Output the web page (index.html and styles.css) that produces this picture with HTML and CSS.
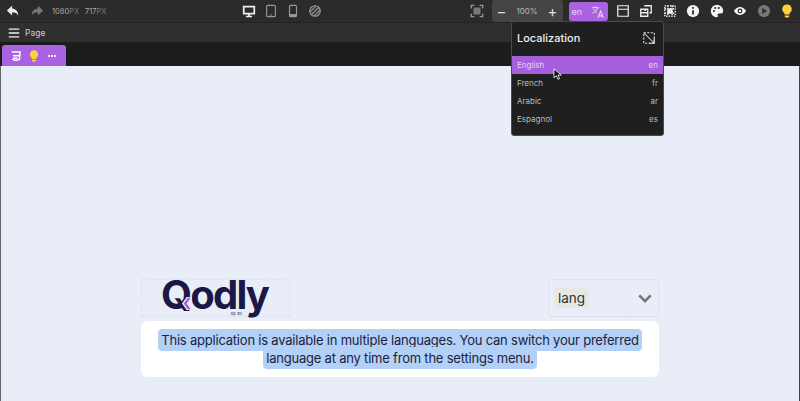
FILE: index.html
```html
<!DOCTYPE html>
<html lang="en">

<head>
    <meta charset="UTF-8">
    <meta name="viewport" content="width=device-width, initial-scale=1.0">
    <title>Qodly Studio</title>
    <link rel="stylesheet" href="styles.css">
</head>

<body>
    <div class="toolbar">
        <div class="history">
            <svg class="icon" viewBox="0 0 16 16"><path fill="#eee" d="M7 2 1 7.500 7 13V9.500c3.500 0 5.500 1 7 4 0-5-2.500-8-7-8.500z"/></svg>
            <svg class="icon" viewBox="0 0 16 16"><path fill="#777" d="M9 2l6 5.500L9 13V9.500c-3.500 0-5.500 1-7 4 0-5 2.500-8 7-8.500z"/></svg>
        </div>
        <div class="size"><b>1080</b>PX</div>
        <div class="size size-h"><b>717</b>PX</div>

        <div class="devices">
            <svg class="icon" viewBox="0 0 16 16"><path fill="none" stroke="#eee" stroke-width="2" d="M2 3h12v8H2z"/><path fill="#eee" d="M4.500 13.500h7V15h-7zM7 11h2v3H7z"/></svg>
            <svg class="icon" viewBox="0 0 16 16"><rect x="3" y="1.500" width="10" height="13" rx="1.500" fill="none" stroke="#999" stroke-width="1.300"/><path stroke="#999" d="M6.500 12.500h3"/></svg>
            <svg class="icon" viewBox="0 0 16 16"><rect x="4" y="1.500" width="8" height="13" rx="1.500" fill="none" stroke="#999" stroke-width="1.300"/><path fill="#999" d="M4 11.500h8v3H4z"/></svg>
            <svg class="icon" viewBox="0 0 16 16"><circle cx="8" cy="8" r="6" fill="none" stroke="#999" stroke-width="1.400"/><path stroke="#999" stroke-width="1.400" d="M4 12l8-8M2.500 9l6.500-6.500M7 13.500 13.500 7"/></svg>
        </div>

        <div class="tools">
            <svg class="icon" viewBox="0 0 16 16"><path fill="none" stroke="#999" stroke-width="1.500" d="M1.500 5V1.500H5M11 1.500h3.500V5M14.500 11v3.500H11M5 14.500H1.500V11"/><path fill="#777" d="M4 4h8v8H4z"/></svg>
            <div class="zoom">
                <span class="zoom-btn">&minus;</span>
                <span class="zoom-val">100%</span>
                <span class="zoom-btn">+</span>
            </div>
            <div class="lang-toggle">
                <span>en</span>
                <svg class="icon" viewBox="0 0 16 16"><path fill="none" stroke="#e6d2f5" stroke-width="1.100" d="M1 3h8M5 1.500V3M7.500 3C7 6 4.500 8.500 1.500 9.500M2.800 4.500c.8 2 2.500 3.500 4.200 4.300"/><path fill="none" stroke="#e6d2f5" stroke-width="1.300" d="M8 14.500l3-7.500 3 7.500M9 12.500h4"/></svg>
            </div>
            <div class="icon-row">
                <svg class="icon" viewBox="0 0 16 16"><path fill="none" stroke="#eee" stroke-width="1.400" d="M2 2h12v12H2zM2 6h12"/></svg>
                <svg class="icon" viewBox="0 0 16 16"><path fill="none" stroke="#eee" stroke-width="1.500" d="M6 2h8v8h-2M2 6h8v8H2zM2 10h8"/><path fill="#eee" d="M6 6h2v2H6z"/></svg>
                <svg class="icon" viewBox="0 0 16 16"><path fill="#eee" d="M5 5h6v6H5z"/><path stroke="#eee" stroke-width="1.600" stroke-dasharray="1.600 1.400" fill="none" d="M2 2h12v12H2zM2 5.500h12M2 10.500h12M5.500 2v12M10.500 2v12"/></svg>
                <svg class="icon" viewBox="0 0 16 16"><circle cx="8" cy="8" r="7" fill="#f4f4f4"/><path fill="#2b2b2b" d="M7 7h2v5H7zM7 3.500h2v2H7z"/></svg>
                <svg class="icon" viewBox="0 0 16 16"><path fill="#f4f4f4" d="M8 1C3.500 1 1 4 1 8s3 7 6.500 7c1.500 0 1.800-1 1.300-2-.5-1.200.2-2.200 1.500-2.200H13c1.500 0 2-1.300 2-3C15 3.500 12 1 8 1z"/><circle cx="4.500" cy="8" r="1.200" fill="#2b2b2b"/><circle cx="6" cy="4.500" r="1.200" fill="#2b2b2b"/><circle cx="10" cy="4.500" r="1.200" fill="#2b2b2b"/></svg>
                <svg class="icon" viewBox="0 0 16 16"><path fill="#f4f4f4" d="M1 8c2-3 4.500-4.500 7-4.500S13 5 15 8c-2 3-4.500 4.500-7 4.500S3 11 1 8z"/><circle cx="8" cy="8" r="2.800" fill="#2b2b2b"/><circle cx="8" cy="8" r="1.400" fill="#f4f4f4"/></svg>
                <svg class="icon" viewBox="0 0 16 16"><circle cx="8" cy="8" r="7" fill="#777"/><path fill="#2b2b2b" d="M6 4.500 11.500 8 6 11.500z"/></svg>
                <svg class="icon" viewBox="0 0 16 16"><path fill="#fbd23c" d="M8 .5a5.300 5.300 0 0 0-3 9.700V12h6v-1.800A5.300 5.300 0 0 0 8 .5z"/><path fill="#fbd23c" d="M5.500 13h5v1.200l-1 1.300h-3l-1-1.300z"/></svg>
            </div>
        </div>
    </div>

    <div class="pagebar">
        <svg class="icon" viewBox="0 0 16 16"><path stroke="#eee" stroke-width="1.500" d="M2 3.500h12M2 8h12M2 12.500h12"/></svg>
        <span>Page</span>
    </div>

    <div class="tabstrip">
        <div class="tab">
            <svg class="icon-sm" viewBox="0 0 16 16"><path fill="none" stroke="#fff" stroke-width="2" d="M2.500 2.500h11l-1 10-5 1.500-4.500-1.500M4 7.500h8M4 11h6"/></svg>
            <svg class="icon-sm" viewBox="0 0 16 16"><path fill="#fbd23c" d="M8 .5a5.300 5.300 0 0 0-3 9.700V12h6v-1.800A5.300 5.300 0 0 0 8 .5z"/><path fill="#fbd23c" d="M5.500 13h5v1.200l-1 1.300h-3l-1-1.300z"/></svg>
            <svg class="icon-sm" viewBox="0 0 16 16"><path fill="#fff" d="M3 6.800h2.400v2.400H3zM6.800 6.800h2.400v2.400H6.800zM10.600 6.800H13v2.400h-2.400z"/></svg>
        </div>
    </div>

    <div class="canvas">
        <div class="header-row">
            <div class="logo-box">
                <span class="logo">Qodly<span class="logo-by">by 4D</span></span>
                <svg class="logo-mark" viewBox="0 0 12 14"><path fill="#a05ce0" stroke="#e9edf7" stroke-width="1.500" d="M7 0h5L7 7l5 7H7L2 7z"/></svg>
            </div>
            <div class="lang-select">
                <div class="lang-value"><span class="lang-chip">lang</span></div>
                <div class="lang-arrow">
                    <svg viewBox="0 0 16 10" width="14" height="9"><path fill="none" stroke="#77746f" stroke-width="3" d="M1.500 1.500 8 8l6.500-6.500"/></svg>
                </div>
            </div>
        </div>
        <div class="message">
            <p><span class="selected">This application is available in multiple languages. You can switch your preferred<br>language at any time from the settings menu.</span></p>
        </div>
    </div>

    <div class="popup">
        <div class="popup-head">
            <span>Localization</span>
            <svg class="icon" viewBox="0 0 16 16"><path fill="none" stroke="#ddd" stroke-width="1.200" stroke-dasharray="2.500 1.500" d="M2 2h12v12H2z"/><path fill="none" stroke="#ddd" stroke-width="1.200" d="M2 2l12 12M14 8v6H8"/></svg>
        </div>
        <ul class="lang-list">
            <li class="active"><span>English</span><span>en</span></li>
            <li><span>French</span><span>fr</span></li>
            <li><span>Arabic</span><span>ar</span></li>
            <li><span>Espagnol</span><span>es</span></li>
        </ul>
    </div>

    <svg class="cursor" viewBox="0 0 12 16"><path fill="#111" stroke="#fff" stroke-width="1" d="M1 1v11l3-2.500 2 4.500 2-1-2-4.300h4z"/></svg>
</body>

</html>
```

FILE: styles.css
```css
* {
    box-sizing: border-box;
}

html,
body {
    height: 100%;
}

body {
    margin: 0;
    display: flex;
    flex-direction: column;
    overflow: hidden;
    background-color: #1c1c1c;
    color: #eee;
    font-family: "Inter", "Liberation Sans", sans-serif;
}

.icon {
    width: 14px;
    height: 14px;
    flex: none;
}

.icon-sm {
    width: 12px;
    height: 12px;
    flex: none;
}

.toolbar {
    display: flex;
    align-items: center;
    flex: none;
    height: 23px;
    padding: 0 6px;
    background-color: #2b2b2b;
    border-bottom: 1px solid #232323;
}

.history {
    display: flex;
    gap: 10px;
}

.size {
    width: 26px;
    margin-left: 8px;
    font-size: 7.5px;
    color: #777;
}

.size b {
    font-weight: 400;
    color: #aaa;
}

.size-h {
    width: 22px;
    margin-left: 7px;
}

.devices {
    display: flex;
    gap: 8px;
    margin-left: 135px;
}

.tools {
    display: flex;
    align-items: center;
    margin-left: auto;
}

.zoom {
    display: flex;
    align-items: center;
    justify-content: space-between;
    width: 71px;
    height: 22px;
    margin-left: 8px;
    padding: 0 5px;
    border-radius: 3px;
    background-color: #444;
    font-size: 8px;
}

.zoom-btn {
    font-size: 15px;
    color: #ddd;
}

.zoom-val {
    color: #bbb;
}

.lang-toggle {
    display: flex;
    align-items: center;
    justify-content: space-between;
    width: 39px;
    height: 19px;
    margin: 1px 0 0 6px;
    padding: 0 3px;
    border-radius: 3px;
    background-color: #ab62e2;
    font-size: 9px;
    color: #e8d4f8;
}

.icon-row {
    display: flex;
    gap: 9.5px;
    margin-left: 8px;
}

.pagebar {
    display: flex;
    align-items: center;
    gap: 4px;
    flex: none;
    height: 19px;
    padding: 1px 0 0 7px;
    background-color: #2f2f2f;
    font-size: 8.5px;
    color: #ccc;
}

.tabstrip {
    flex: none;
    height: 24px;
    padding: 3px 0 0 2px;
}

.tab {
    display: flex;
    align-items: center;
    gap: 6px;
    width: 64px;
    height: 21px;
    padding-left: 8px;
    border-radius: 3px 3px 0 0;
    background-color: #ab62e2;
}

.canvas {
    flex: 1;
    padding: 213px 140px 0 140px;
    border-left: 1px solid #666;
    border-right: 1px solid #444;
    background-color: #e9edf7;
}

.header-row {
    display: flex;
    justify-content: space-between;
    height: 38px;
}

.logo-box {
    position: relative;
    width: 149px;
    border: 1px dashed #dde1eb;
}

.logo {
    display: block;
    padding-left: 19px;
    font-size: 40px;
    line-height: 30px;
    font-weight: 700;
    letter-spacing: -1.800px;
    color: #1b1846;
}

.logo-mark {
    position: absolute;
    top: 17px;
    left: 39px;
    width: 11px;
    height: 13px;
}

.logo-by {
    position: absolute;
    top: 31px;
    left: 89px;
    font-size: 4px;
    line-height: 5px;
    font-weight: 400;
    letter-spacing: 0;
}

.lang-select {
    display: flex;
    width: 111px;
    border: 1px solid #dde1eb;
    border-radius: 3px;
}

.lang-value {
    display: flex;
    align-items: center;
    flex: 1;
    padding-left: 5px;
    border-right: 1px solid #e6e9f2;
}

.lang-chip {
    padding: 2px 4px;
    border-radius: 3px;
    background-color: #e7e7e3;
    font-size: 13.5px;
    color: #333;
}

.lang-arrow {
    display: flex;
    align-items: center;
    justify-content: center;
    width: 27px;
}

.message {
    height: 56px;
    margin-top: 4px;
    padding-top: 10px;
    border-radius: 6px;
    background-color: #fff;
    text-align: center;
}

.message p {
    margin: 0;
    font-size: 13px;
    line-height: 18px;
    letter-spacing: -0.210px;
    color: #1c2340;
}

.selected {
    padding: 3px;
    border-radius: 4px;
    background-color: #b3d0f7;
    -webkit-box-decoration-break: clone;
    box-decoration-break: clone;
}

.popup {
    position: absolute;
    top: 21px;
    left: 511px;
    width: 153px;
    height: 115px;
    border: 1px solid #4a4a4a;
    border-radius: 3px;
    background-color: #1f1f1f;
}

.popup-head {
    display: flex;
    align-items: center;
    justify-content: space-between;
    height: 32px;
    padding: 0 7px 0 5px;
    font-size: 11px;
    font-weight: 500;
    color: #eee;
}

.lang-list {
    margin: 2px 0 0;
    padding: 0;
    list-style: none;
}

.lang-list li {
    display: flex;
    justify-content: space-between;
    align-items: center;
    height: 18px;
    padding: 0 5px;
    font-size: 8px;
    color: #bbb;
}

.lang-list li.active {
    background-color: #a55fdc;
    color: #e6d2f5;
}

.cursor {
    position: absolute;
    top: 68px;
    left: 553px;
    width: 10px;
    height: 13px;
}
```
